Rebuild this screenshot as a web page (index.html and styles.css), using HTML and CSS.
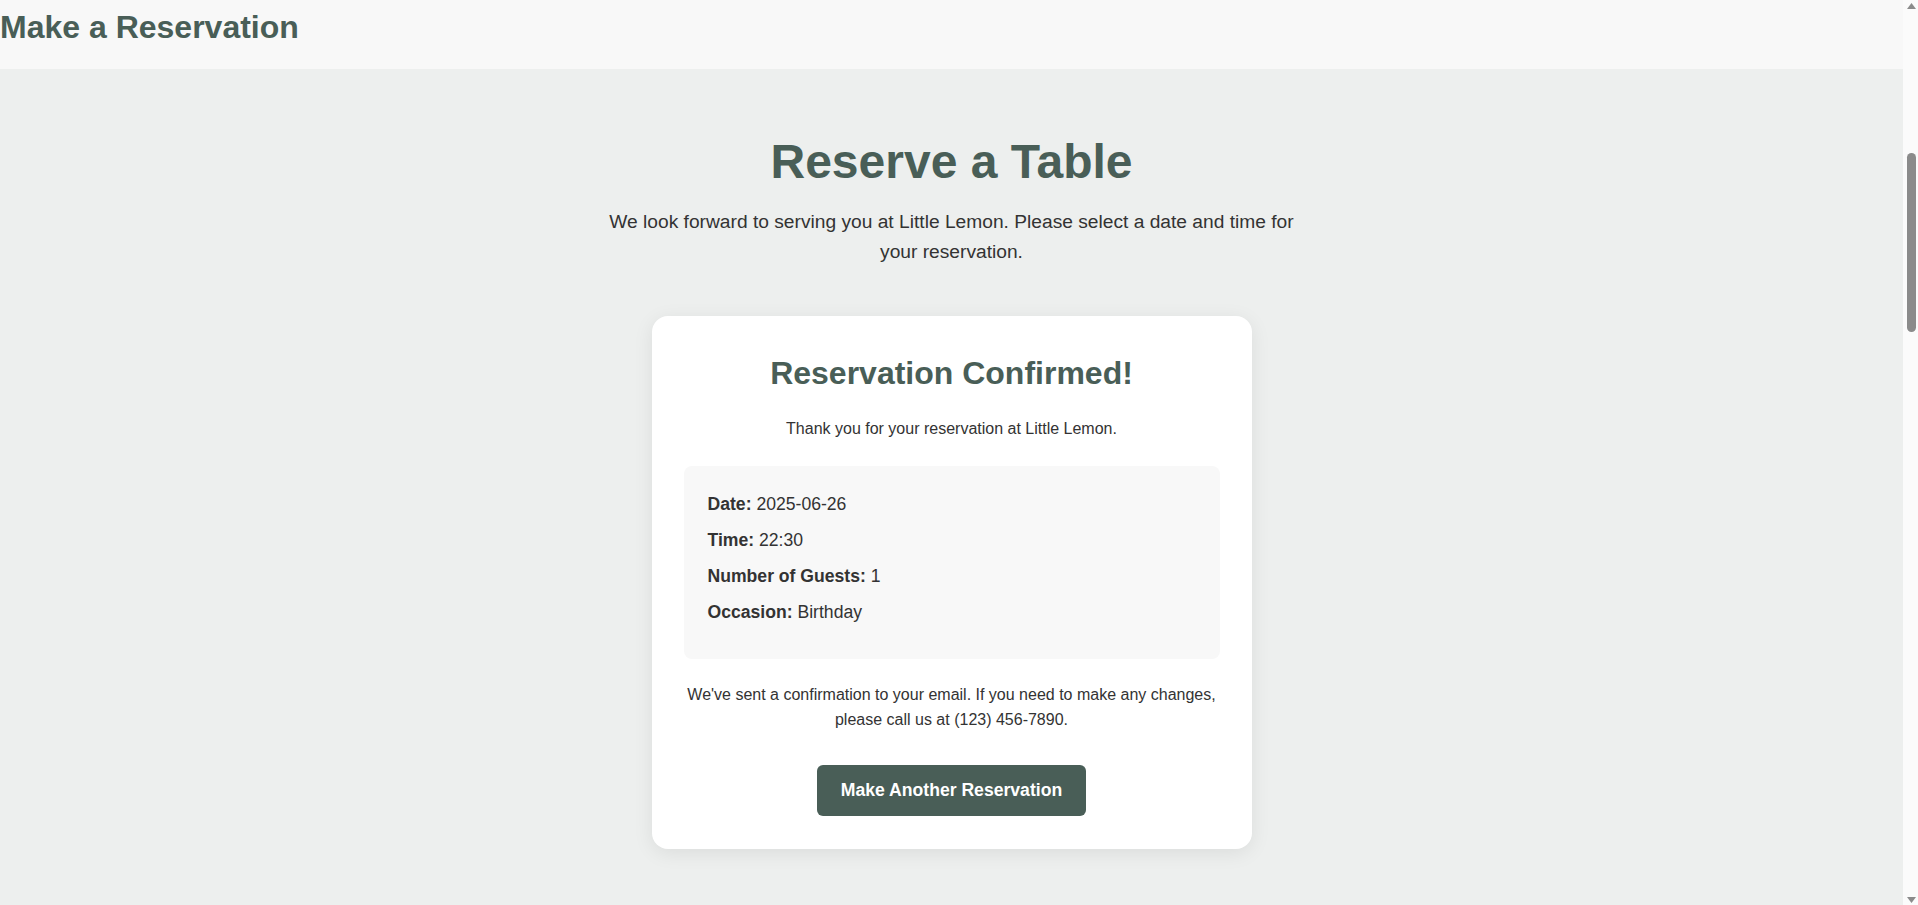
FILE: index.html
```html
<!DOCTYPE html>
<html lang="en">
<head>
    <meta charset="UTF-8">
    <meta name="viewport" content="width=device-width, initial-scale=1.0">
    <title>Little Lemon - Make a Reservation</title>
    <link rel="stylesheet" href="styles.css">
</head>
<body>
    <header class="page-header">
        <h1>Make a Reservation</h1>
    </header>

    <main class="booking-page">
        <section class="booking-intro">
            <h2>Reserve a Table</h2>
            <p>We look forward to serving you at Little Lemon. Please select a date and time for your reservation.</p>
        </section>

        <div class="confirmation-card">
            <h3>Reservation Confirmed!</h3>
            <p class="confirmation-text">Thank you for your reservation at Little Lemon.</p>

            <div class="booking-details">
                <p><strong>Date:</strong> 2025-06-26</p>
                <p><strong>Time:</strong> 22:30</p>
                <p><strong>Number of Guests:</strong> 1</p>
                <p><strong>Occasion:</strong> Birthday</p>
            </div>

            <p class="confirmation-text email-note">We've sent a confirmation to your email. If you need to make any changes, please call us at (123) 456-7890.</p>

            <button class="btn-primary" type="button">Make Another Reservation</button>
        </div>
    </main>

    <!-- page scrollbar -->
    <div class="scroll-rail" aria-hidden="true">
        <svg width="15" height="905" viewBox="0 0 15 905">
            <polygon points="8.5,3 13,9 4,9" fill="#8b8b8b"/>
            <rect x="4" y="153" width="9" height="179" rx="4.5" fill="#8b8b8b"/>
            <polygon points="4,897 13,897 8.5,903" fill="#8b8b8b"/>
        </svg>
    </div>
</body>
</html>
```

FILE: styles.css
```css
* {
    box-sizing: border-box;
}
html {
    background-color: #fbfbfb;
}
body {
    margin: 0 15px 0 0;
    font-family: "Liberation Sans", Arial, sans-serif;
    color: #333333;
    line-height: 1.6;
    background-color: #edefee;
    min-height: 100vh;
}
.page-header {
    background-color: #f8f8f8;
    padding: 9px 0 23px;
}
.page-header h1 {
    margin: 0;
    font-size: 32px;
    line-height: normal;
    color: #495e57;
}
.booking-page {
    padding: 48px 16px 56px;
    text-align: center;
}
.booking-intro h2 {
    margin: 16px 0 16px;
    font-size: 48px;
    line-height: 1.2;
    color: #495e57;
}
.booking-intro p {
    max-width: 700px;
    margin: 0 auto 48px;
    font-size: 1.2rem;
}
.confirmation-card {
    max-width: 600px;
    margin: 0 auto;
    padding: 32px 32px 33px;
    background-color: #ffffff;
    border-radius: 16px;
    box-shadow: 0 4px 20px rgba(0, 0, 0, 0.08);
}
.confirmation-card h3 {
    margin: 2px 0 20px;
    font-size: 32px;
    line-height: 1.45;
    color: #495e57;
}
.confirmation-text {
    margin: 0 0 24px;
    font-size: 16px;
}
.email-note {
    margin-bottom: 32px;
}
.booking-details {
    background-color: #f8f8f8;
    border-radius: 8px;
    padding: 24px;
    margin-bottom: 23px;
    text-align: left;
}
.booking-details p {
    margin: 0 0 0.5rem;
    font-size: 1.1rem;
}
.btn-primary {
    padding: 15px 24px;
    background-color: #495e57;
    color: #ffffff;
    border: none;
    border-radius: 6px;
    font-family: inherit;
    font-size: 1.1rem;
    font-weight: bold;
    line-height: 1.2;
    cursor: pointer;
}
.btn-primary:hover {
    background-color: #3a4b45;
}
.scroll-rail {
    position: fixed;
    top: 0;
    right: 0;
    width: 15px;
    height: 100vh;
    background-color: #fbfbfb;
}
.scroll-rail svg {
    display: block;
}
```
